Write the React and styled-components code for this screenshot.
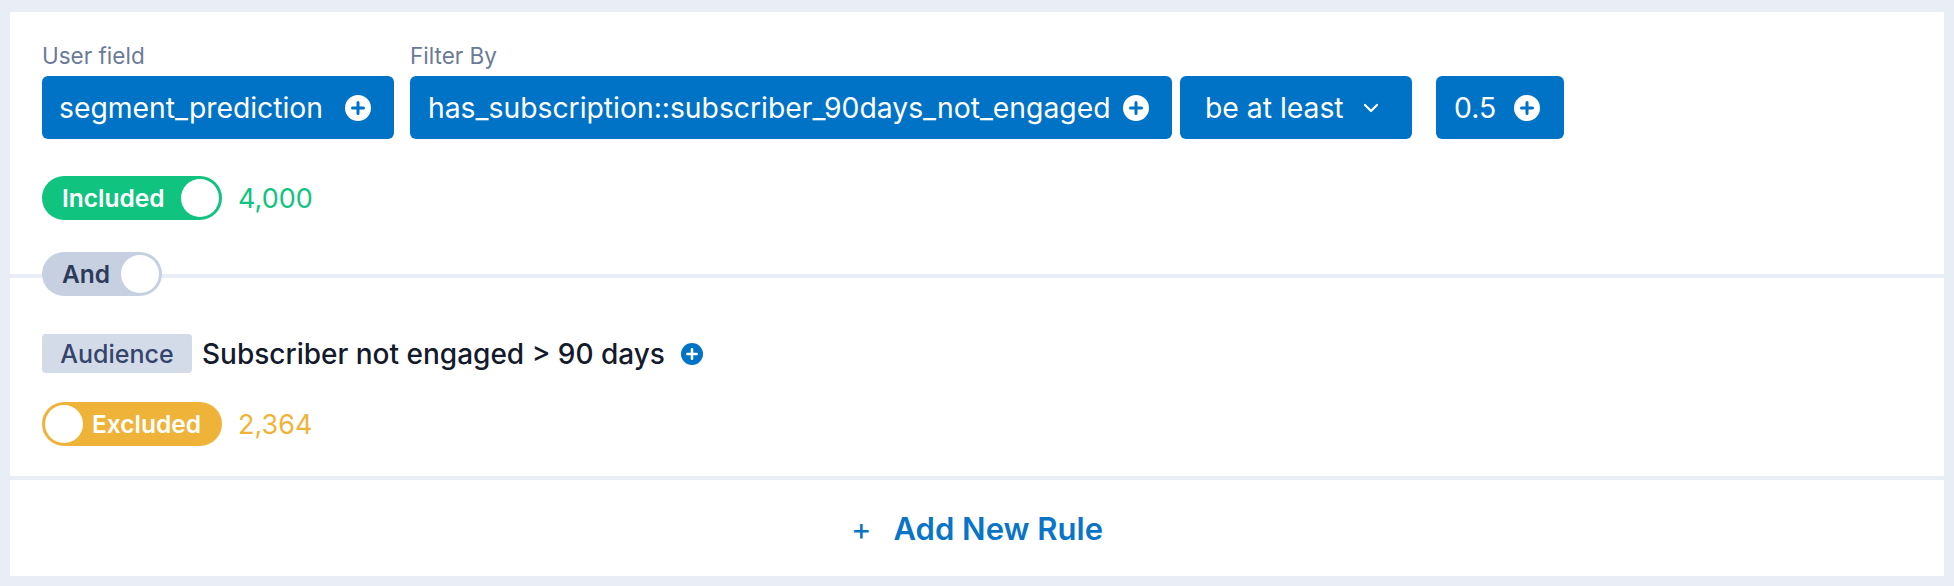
import React from "react";
import styled, { createGlobalStyle } from "styled-components";

const GlobalStyle = createGlobalStyle`
  body {
    margin: 0;
    background: #e9edf5;
    font-family: Inter, "Noto Sans", sans-serif;
  }
`;

const tones = {
  green: { bg: "#10c47f", text: "#ffffff", count: "#10c47f" },
  gray: { bg: "#c7d0e0", text: "#2c3a5c", count: "#2c3a5c" },
  orange: { bg: "#f0b339", text: "#ffffff", count: "#f0b339" },
};

const Page = styled.div`
  display: flex;
  flex-direction: column;
  gap: 4px;
  padding: 12px 10px 10px;
`;

const Card = styled.section`
  position: relative;
  background: #ffffff;
  padding: ${(p) => p.$pad || "0 32px"};
  height: ${(p) => p.$h}px;
  box-sizing: border-box;
`;

const FieldRow = styled.div`
  display: flex;
  align-items: flex-end;
`;

const FieldGroup = styled.div`
  display: flex;
  flex-direction: column;
  gap: 7px;
  margin-right: ${(p) => p.$mr || 0}px;
`;

const Label = styled.div`
  font-size: 22.5px;
  line-height: 26px;
  color: #6b7a99;
`;

const ChipLine = styled.div`
  display: flex;
  gap: 8px;
`;

const Chip = styled.div`
  display: flex;
  align-items: center;
  justify-content: space-between;
  box-sizing: border-box;
  width: ${(p) => p.$w}px;
  height: 63px;
  padding: ${(p) => p.$pad || "0 23px 0 17px"};
  background: #0073c7;
  border-radius: 6px;
  color: #ffffff;
  font-size: 28.3px;
  white-space: nowrap;
`;

const StatusRow = styled.div`
  display: flex;
  align-items: center;
  margin-top: ${(p) => p.$mt || 0}px;
`;

const Pill = styled.div`
  display: flex;
  align-items: center;
  justify-content: space-between;
  flex-direction: ${(p) => (p.$knob === "left" ? "row-reverse" : "row")};
  box-sizing: border-box;
  width: ${(p) => p.$w}px;
  height: 44px;
  padding: ${(p) => (p.$knob === "left" ? "0 21px 0 3px" : "0 3px 0 20px")};
  border-radius: 22px;
  background: ${(p) => tones[p.$tone].bg};
  color: ${(p) => tones[p.$tone].text};
  font-size: 24.5px;
  font-weight: 600;
`;

const Knob = styled.span`
  width: 38px;
  height: 38px;
  border-radius: 50%;
  background: #ffffff;
`;

const Count = styled.span`
  margin-left: 16px;
  font-size: 27px;
  color: ${(p) => tones[p.$tone].count};
`;

const Connector = styled.div`
  position: absolute;
  left: 32px;
  bottom: -22px;
  z-index: 1;
`;

const AudienceRow = styled.div`
  display: flex;
  align-items: center;
  gap: 10px;
`;

const Badge = styled.span`
  display: flex;
  align-items: center;
  justify-content: center;
  width: 150px;
  height: 39px;
  border-radius: 4px;
  background: #d3dbe8;
  color: #34446a;
  font-size: 25px;
  font-weight: 500;
`;

const AudienceName = styled.span`
  font-size: 28px;
  font-weight: 500;
  color: #141a2b;
`;

const IconSlot = styled.span`
  display: flex;
  margin-left: ${(p) => p.$ml || 0}px;
`;

const AddRule = styled.button`
  display: flex;
  align-items: center;
  justify-content: center;
  gap: 22px;
  width: 100%;
  height: 100%;
  border: 0;
  background: none;
  color: #0a74c7;
  font-family: inherit;
  font-size: 31px;
  font-weight: 600;
  cursor: pointer;
`;

const PlusGlyph = styled.span`
  font-weight: 400;
`;

const PlusCircle = ({ size = 26, fill = "#ffffff", mark = "#0073c7" }) => (
  <svg width={size} height={size} viewBox="0 0 26 26">
    <circle cx="13" cy="13" r="13" fill={fill} />
    <path d="M13 7.5v11M7.5 13h11" stroke={mark} strokeWidth="3" strokeLinecap="round" />
  </svg>
);

const Chevron = () => (
  <svg width="18" height="12" viewBox="0 0 18 12">
    <path d="M3 3l6 6 6-6" fill="none" stroke="#ffffff" strokeWidth="2.2" strokeLinecap="round" strokeLinejoin="round" />
  </svg>
);

const Toggle = ({ tone, knob, w, children }) => (
  <Pill $tone={tone} $knob={knob} $w={w}>
    <span>{children}</span>
    <Knob />
  </Pill>
);

export default function App() {
  return (
    <>
      <GlobalStyle />
      <Page>
        <Card $h={262} $pad="31px 32px 0">
          <FieldRow>
            <FieldGroup $mr={16}>
              <Label>User field</Label>
              <Chip $w={352}>
                segment_prediction
                <PlusCircle />
              </Chip>
            </FieldGroup>
            <FieldGroup $mr={24}>
              <Label>Filter By</Label>
              <ChipLine>
                <Chip $w={762} $pad="0 23px 0 18px">
                  has_subscription::subscriber_90days_not_engaged
                  <PlusCircle />
                </Chip>
                <Chip $w={232} $pad="0 32px 0 25px">
                  be at least
                  <Chevron />
                </Chip>
              </ChipLine>
            </FieldGroup>
            <Chip $w={128} $pad="0 24px 0 18px">
              0.5
              <PlusCircle />
            </Chip>
          </FieldRow>
          <StatusRow $mt={37}>
            <Toggle tone="green" knob="right" w={180}>Included</Toggle>
            <Count $tone="green">4,000</Count>
          </StatusRow>
          <Connector>
            <Toggle tone="gray" knob="right" w={120}>And</Toggle>
          </Connector>
        </Card>

        <Card $h={198} $pad="56px 32px 0">
          <AudienceRow>
            <Badge>Audience</Badge>
            <AudienceName>Subscriber not engaged &gt; 90 days</AudienceName>
            <IconSlot $ml={6}>
              <PlusCircle size={22} fill="#0073c7" mark="#ffffff" />
            </IconSlot>
          </AudienceRow>
          <StatusRow $mt={29}>
            <Toggle tone="orange" knob="left" w={180}>Excluded</Toggle>
            <Count $tone="orange">2,364</Count>
          </StatusRow>
        </Card>

        <Card $h={96} $pad="0">
          <AddRule>
            <PlusGlyph>+</PlusGlyph>
            Add New Rule
          </AddRule>
        </Card>
      </Page>
    </>
  );
}
